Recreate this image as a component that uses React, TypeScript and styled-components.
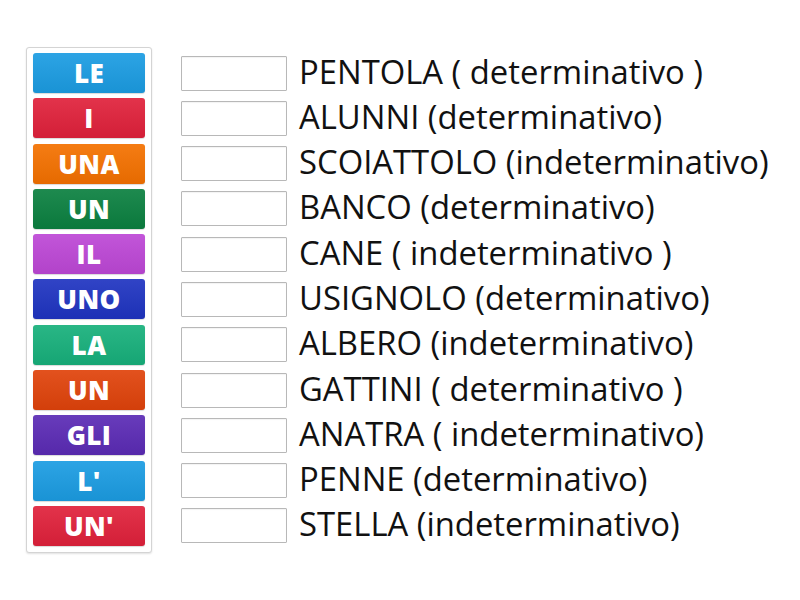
import React from 'react';
import styled, { createGlobalStyle } from 'styled-components';

const GlobalStyle = createGlobalStyle`
  body {
    margin: 0;
    background: #fff;
    font-family: "Open Sans", "Liberation Sans", sans-serif;
  }
`;

const Page = styled.div`
  display: flex;
  align-items: flex-start;
  width: 800px;
  height: 600px;
  padding: 47px 0 0 26px;
  box-sizing: border-box;
`;

const Board = styled.div`
  display: flex;
  flex-direction: column;
  gap: 5.3px;
  padding: 5px 6px 6px;
  border: 1px solid #d4d4d4;
  border-radius: 3px;
  box-shadow: 0 1px 2px rgba(0, 0, 0, 0.12);
  background: #fff;
`;

const Tile = styled.div<{ $color: string }>`
  display: flex;
  align-items: center;
  justify-content: center;
  width: 112px;
  height: 40px;
  border-radius: 3px;
  background: ${p => p.$color};
  background-image: linear-gradient(
    to bottom,
    rgba(255, 255, 255, 0.08),
    rgba(0, 0, 0, 0.06)
  );
  box-shadow: 0 1px 1px rgba(0, 0, 0, 0.15);
  color: #fff;
  font-size: 26px;
  font-weight: 800;
  letter-spacing: 0.4px;
`;

const Answers = styled.div`
  display: flex;
  flex-direction: column;
  gap: 5.3px;
  margin: 6px 0 0 29px;
`;

const Row = styled.div`
  display: flex;
  align-items: center;
  height: 40px;
`;

const Slot = styled.div`
  width: 104px;
  height: 33px;
  border: 1px solid #b8b8b8;
  border-radius: 1px;
  background: #fff;
  box-shadow: inset 0 1px 1px rgba(0, 0, 0, 0.05);
`;

const Label = styled.span`
  margin: -3px 0 0 12px;
  font-size: 32.8px;
  line-height: 40px;
  color: #111;
  white-space: nowrap;
`;

const TILES: [string, string][] = [
  ['LE', '#1b9ce2'],
  ['I', '#e0213b'],
  ['UNA', '#f47100'],
  ['UN', '#0b8040'],
  ['IL', '#bd47d6'],
  ['UNO', '#1f34c1'],
  ['LA', '#17b07b'],
  ['UN', '#e0430b'],
  ['GLI', '#5b2bb5'],
  ["L'", '#1b9ce2'],
  ["UN'", '#e0213b'],
];

const WORDS: string[] = [
  'PENTOLA ( determinativo )',
  'ALUNNI (determinativo)',
  'SCOIATTOLO (indeterminativo)',
  'BANCO (determinativo)',
  'CANE ( indeterminativo )',
  'USIGNOLO (determinativo)',
  'ALBERO (indeterminativo)',
  'GATTINI ( determinativo )',
  'ANATRA ( indeterminativo)',
  'PENNE (determinativo)',
  'STELLA (indeterminativo)',
];

export default function App() {
  return (
    <>
      <GlobalStyle />
      <Page>
        <Board>
          {TILES.map(([text, color], i) => (
            <Tile key={`${text}-${i}`} $color={color}>
              {text}
            </Tile>
          ))}
        </Board>
        <Answers>
          {WORDS.map((word, i) => (
            <Row key={`${word}-${i}`}>
              <Slot />
              <Label>{word}</Label>
            </Row>
          ))}
        </Answers>
      </Page>
    </>
  );
}
